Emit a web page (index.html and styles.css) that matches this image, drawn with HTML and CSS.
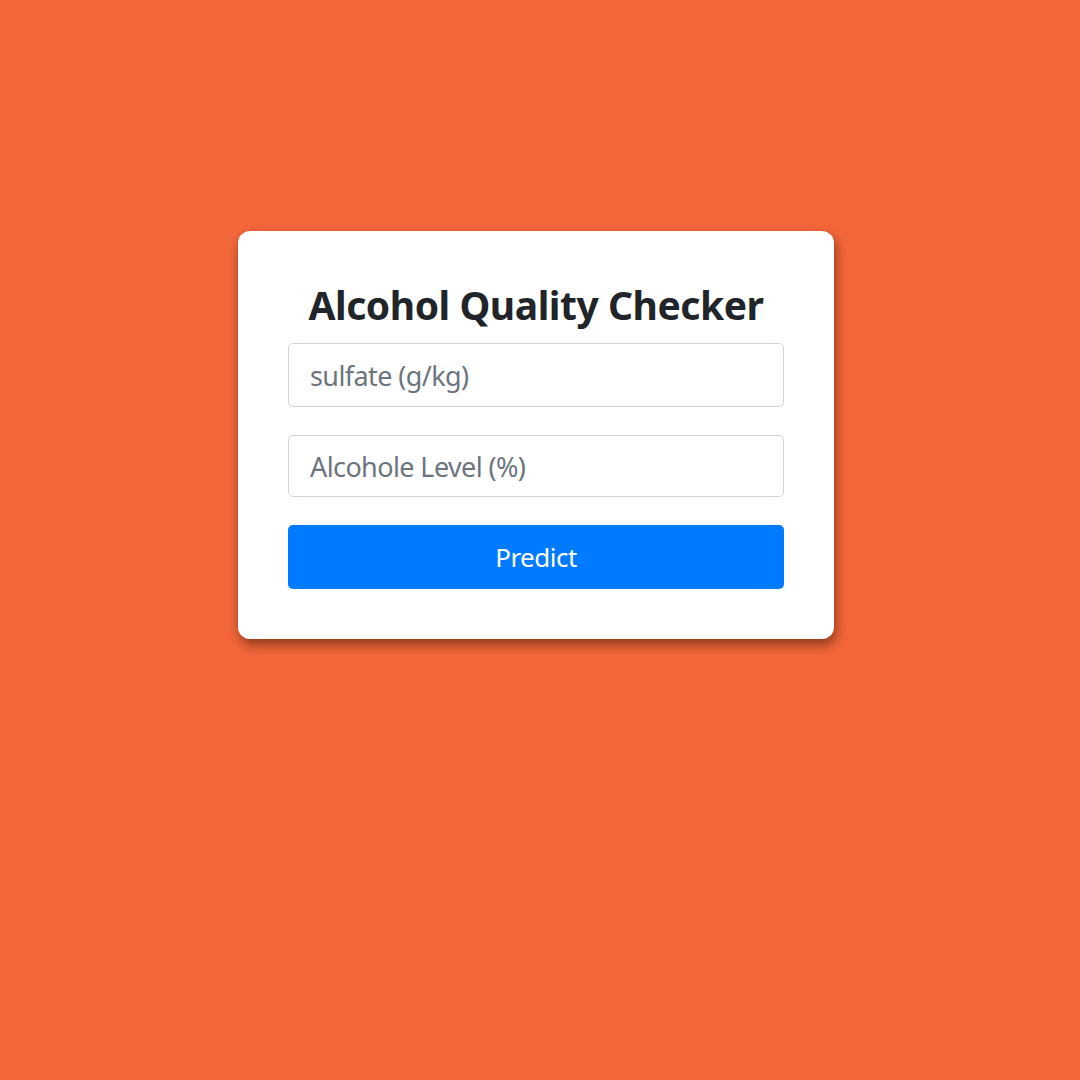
FILE: index.html
```html
<!DOCTYPE html>
<html>
<head>
<meta charset="utf-8">
<link rel="stylesheet" href="styles.css">
</head>
<body>
<div class="page">
  <div class="card">
    <h2 class="title">Alcohol Quality Checker</h2>
    <form class="form">
      <input class="field" type="text" placeholder="sulfate (g/kg)">
      <input class="field field-short" type="text" placeholder="Alcohole Level (%)">
      <button class="btn" type="button">Predict</button>
    </form>
  </div>
</div>
</body>
</html>
```
FILE: styles.css
```css
html, body {
  margin: 0;
  padding: 0;
  height: 100%;
  background: #f4673b;
}
body {
  font-family: "Noto Sans", "Open Sans", sans-serif;
  color: #212529;
}
.page {
  display: flex;
  justify-content: center;
  padding-top: 231px;
  padding-right: 8px;
}
.card {
  width: 496px;
  padding: 46px 50px 50px;
  background: #fff;
  border-radius: 12px;
  box-shadow: 2px 6px 12px rgba(60, 20, 5, 0.55);
}
.title {
  margin: 0 0 10px;
  text-align: center;
  font-size: 39px;
  letter-spacing: -0.45px;
  font-weight: 700;
  line-height: 56px;
  color: #212529;
}
.form {
  display: flex;
  flex-direction: column;
  gap: 28px;
}
.field {
  box-sizing: border-box;
  height: 64px;
  padding: 0 21px;
  border: 1px solid #ced4da;
  border-radius: 5px;
  font-family: inherit;
  font-size: 27px;
  letter-spacing: -0.6px;
  color: #495057;
  background: #fff;
  outline: none;
}
.field-short {
  height: 62px;
}
.field::placeholder {
  color: #6c757d;
}
.btn {
  height: 64px;
  border: none;
  border-radius: 5px;
  background: #007bff;
  color: #fff;
  font-family: inherit;
  font-size: 26px;
  letter-spacing: -0.5px;
  cursor: pointer;
}
```
